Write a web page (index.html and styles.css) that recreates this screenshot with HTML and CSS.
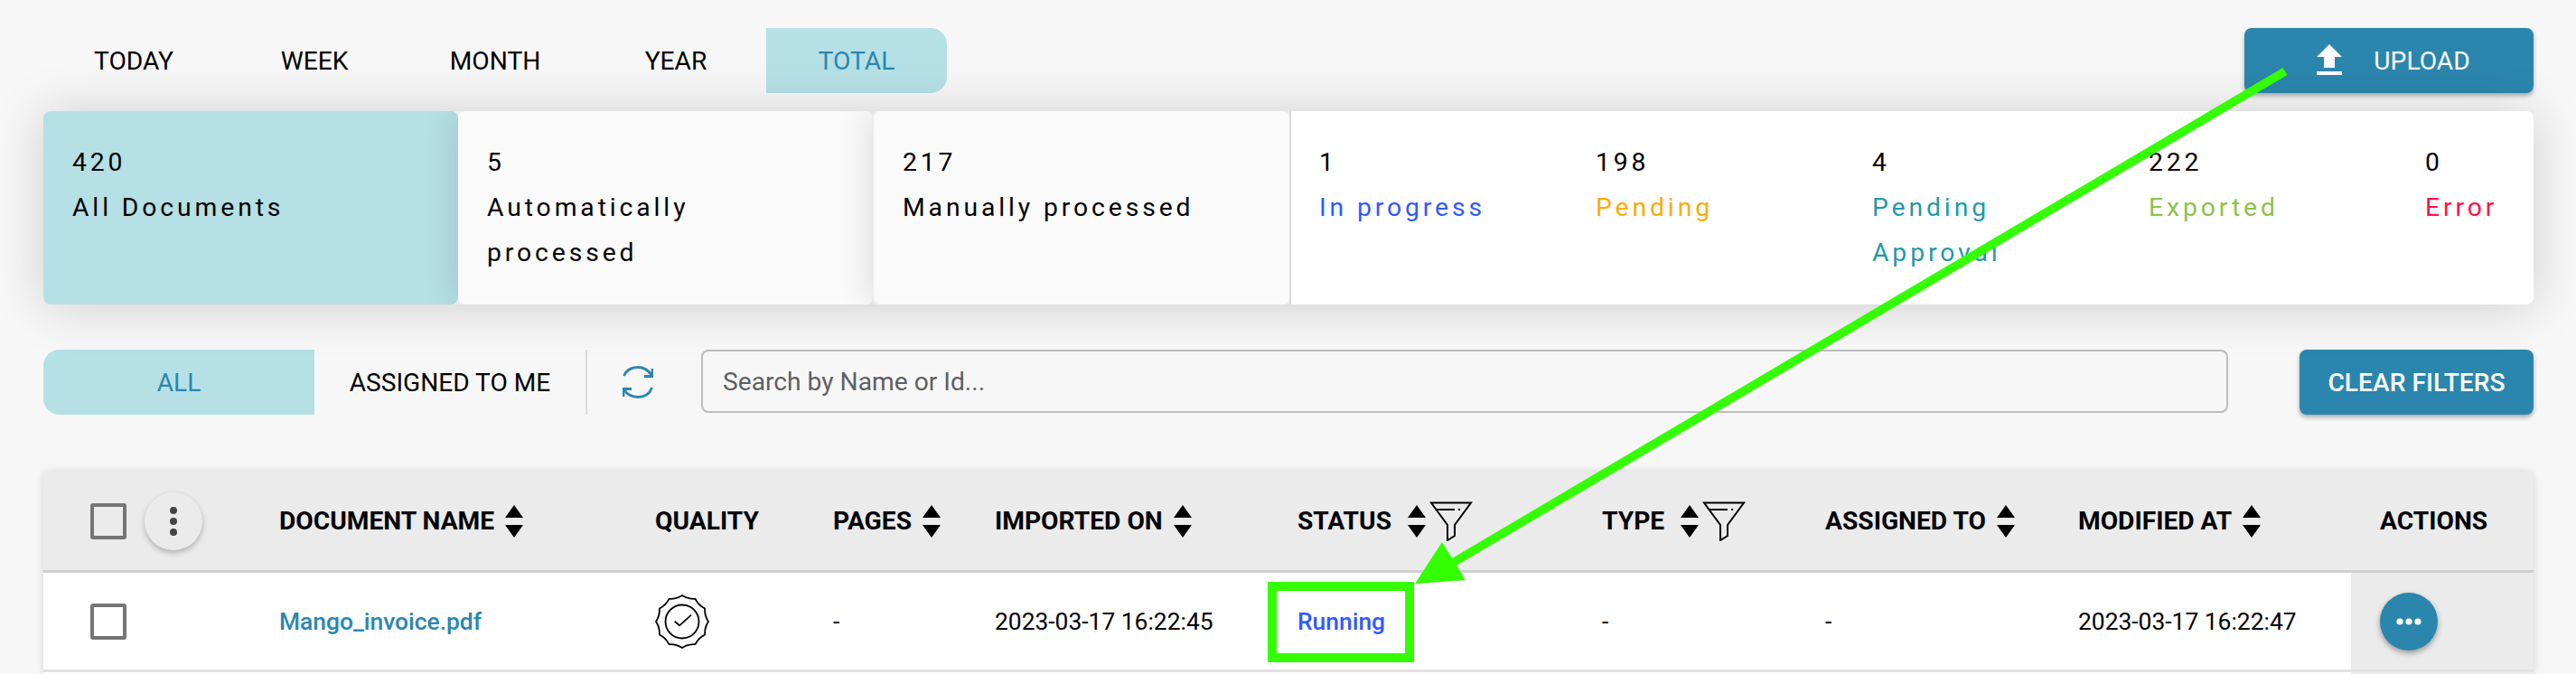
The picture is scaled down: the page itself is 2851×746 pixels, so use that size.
FILE: index.html
```html
<!DOCTYPE html>
<html lang="en">
<head>
  <meta charset="UTF-8" />
  <title>Documents</title>
  <link rel="stylesheet" href="styles.css">
</head>
<body>

  <!-- Period tabs and upload -->
  <div class="top-bar">
    <div class="period-tabs">
      <div class="tab">TODAY</div>
      <div class="tab">WEEK</div>
      <div class="tab">MONTH</div>
      <div class="tab">YEAR</div>
      <div class="tab tab-active">TOTAL</div>
    </div>
    <button class="upload-button">
      <svg class="upload-icon" viewBox="0 0 24 24"><path d="M9 16h6v-6h4l-7-7-7 7h4zm-4 2h14v2H5z"/></svg>
      UPLOAD
    </button>
  </div>

  <!-- Counters -->
  <div class="stats">
    <div class="stat-card stat-card-active">
      <div class="stat-num">420</div>
      <div class="stat-label">All Documents</div>
    </div>
    <div class="stat-card">
      <div class="stat-num">5</div>
      <div class="stat-label">Automatically processed</div>
    </div>
    <div class="stat-card">
      <div class="stat-num">217</div>
      <div class="stat-label">Manually processed</div>
    </div>
    <div class="stat-status">
      <div class="status-col">
        <div class="stat-num">1</div>
        <div class="stat-label c-progress">In progress</div>
      </div>
      <div class="status-col">
        <div class="stat-num">198</div>
        <div class="stat-label c-pending">Pending</div>
      </div>
      <div class="status-col">
        <div class="stat-num">4</div>
        <div class="stat-label c-approval">Pending Approval</div>
      </div>
      <div class="status-col">
        <div class="stat-num">222</div>
        <div class="stat-label c-exported">Exported</div>
      </div>
      <div class="status-col status-col-last">
        <div class="stat-num">0</div>
        <div class="stat-label c-error">Error</div>
      </div>
    </div>
  </div>

  <!-- Filters -->
  <div class="filter-bar">
    <div class="assign-tab assign-tab-active">ALL</div>
    <div class="assign-tab">ASSIGNED TO ME</div>
    <div class="refresh-cell">
      <svg class="refresh-icon" viewBox="0 0 34 36">
        <path d="M1.5 11C4 5 10 1.5 17 1.5C23 1.5 28 4 32 10M33 3V11.5H24"/>
        <path d="M32.5 24C30 31 24 34.5 17 34.5C10 34.5 5 31.5 1.5 26M1 34V25.5H10"/>
      </svg>
    </div>
    <input class="search" type="text" placeholder="Search by Name or Id...">
    <button class="clear-button">CLEAR FILTERS</button>
  </div>

  <!-- Documents table -->
  <div class="doc-table">
    <div class="doc-row doc-head">
      <div class="cell cell-check">
        <span class="checkbox"></span>
        <span class="round-button">
          <svg class="kebab" viewBox="0 0 10 34"><circle cx="5" cy="5" r="4"/><circle cx="5" cy="17" r="4"/><circle cx="5" cy="29" r="4"/></svg>
        </span>
      </div>
      <div class="cell">DOCUMENT NAME <svg class="sort"><use href="#sort-icon"/></svg></div>
      <div class="cell">QUALITY</div>
      <div class="cell">PAGES <svg class="sort"><use href="#sort-icon"/></svg></div>
      <div class="cell">IMPORTED ON <svg class="sort"><use href="#sort-icon"/></svg></div>
      <div class="cell">STATUS <svg class="sort sort-wide"><use href="#sort-icon"/></svg><svg class="funnel"><use href="#funnel-icon"/></svg></div>
      <div class="cell">TYPE <svg class="sort sort-wide"><use href="#sort-icon"/></svg><svg class="funnel"><use href="#funnel-icon"/></svg></div>
      <div class="cell">ASSIGNED TO <svg class="sort"><use href="#sort-icon"/></svg></div>
      <div class="cell">MODIFIED AT <svg class="sort"><use href="#sort-icon"/></svg></div>
      <div class="cell cell-actions">ACTIONS</div>
    </div>
    <div class="doc-row doc-body">
      <div class="cell cell-check"><span class="checkbox"></span></div>
      <div class="cell doc-link">Mango_invoice.pdf</div>
      <div class="cell">
        <svg class="badge" viewBox="0 0 60 60">
          <path d="M30 1Q36.6 5.37 44.5 4.89Q48.03 11.97 55.11 15.5Q54.63 23.4 59 30Q54.63 36.6 55.11 44.5Q48.03 48.03 44.5 55.11Q36.6 54.63 30 59Q23.4 54.63 15.5 55.11Q11.97 48.03 4.89 44.5Q5.37 36.6 1 30Q5.37 23.4 4.89 15.5Q11.97 11.97 15.5 4.89Q23.4 5.37 30 1Z"/>
          <circle cx="30" cy="30" r="18.5"/>
          <path d="M21.7 29.7L27 34.3L40 22.7"/>
        </svg>
      </div>
      <div class="cell">-</div>
      <div class="cell">2023-03-17 16:22:45</div>
      <div class="cell c-running">Running</div>
      <div class="cell">-</div>
      <div class="cell">-</div>
      <div class="cell">2023-03-17 16:22:47</div>
      <div class="cell cell-actions">
        <span class="action-button">
          <svg class="dots" viewBox="0 0 28 8"><circle cx="4" cy="4" r="3.6"/><circle cx="14" cy="4" r="3.6"/><circle cx="24" cy="4" r="3.6"/></svg>
        </span>
      </div>
    </div>
    <div class="doc-row doc-tail"><div class="cell cell-actions"></div></div>
  </div>

  <!-- Shared icons -->
  <svg class="icon-defs">
    <symbol id="sort-icon" viewBox="0 0 20 36">
      <path d="M10 0L20 14H0ZM0 22H20L10 36Z"/>
    </symbol>
    <symbol id="funnel-icon" viewBox="0 0 48 44">
      <path class="funnel-line" d="M2 1.5H46L28 26V38L20 43V26ZM8 9H28M32 9H34"/>
    </symbol>
  </svg>

  <!-- Screenshot annotation -->
  <svg class="annotation" viewBox="0 0 2851 746">
    <rect class="note-box" x="1408" y="649" width="152" height="79"/>
    <line class="note-line" x1="2529" y1="79" x2="1606" y2="624"/>
    <polygon class="note-head" points="1566,646 1596,600 1622,642"/>
  </svg>

</body>
</html>
```

FILE: styles.css
```css
html {
  height: 746px;
  overflow: hidden;
}
body {
  font-family: Roboto, sans-serif;
  margin: 0;
  padding: 31px 47px 0 48px;
  background-color: #f7f7f7;
  color: #000;
  position: relative;
  height: 715px;
  overflow: hidden;
}
button {
  font-family: inherit;
  border: none;
  cursor: pointer;
}
/* Top bar */
.top-bar {
  display: flex;
  justify-content: space-between;
  height: 72px;
}
.period-tabs {
  display: flex;
}
.tab {
  width: 200px;
  display: flex;
  align-items: center;
  justify-content: center;
  font-size: 28.2px;
}
.tab-active {
  background-color: #b5e0e5;
  color: #2b86ad;
  border-radius: 0 18px 18px 0;
}
.upload-button {
  width: 320px;
  background-color: #2b86ad;
  color: #fff;
  font-size: 28.2px;
  border-radius: 8px;
  display: flex;
  align-items: center;
  justify-content: center;
  gap: 25px;
  padding: 0;
  box-shadow: 0 3px 5px rgba(0, 0, 0, 0.3);
}
.upload-icon {
  width: 48px;
  height: 48px;
  fill: #fff;
}
/* Counters */
.stats {
  display: flex;
  position: relative;
  margin-top: 20px;
  height: 214px;
  border-radius: 8px;
  box-shadow: 0 2px 56px rgba(0, 0, 0, 0.17);
}
.stat-card {
  flex: none;
  width: 460px;
  padding: 32px;
  box-sizing: border-box;
  background-color: #fafafa;
  border-radius: 8px;
  box-shadow: 0 0 40px rgba(0, 0, 0, 0.15);
  clip-path: inset(0 0 0 -50px); /* shadow only falls on the card to the left */
  position: relative;
}
.stat-card-active {
  width: 459px;
  background-color: #b5e0e5;
  box-shadow: none;
}
.stat-status {
  flex: 1;
  min-width: 0;
  display: flex;
  position: relative;
  background-color: #fff;
  border-left: 2px solid #dcdcdc;
  border-radius: 0 8px 8px 0;
  padding: 32px 0 0 31px;
}
.status-col {
  flex: none;
  width: 306px;
  padding-right: 60px;
  box-sizing: border-box;
}
.status-col-last {
  width: 120px;
  padding-right: 0;
}
.stat-num, .stat-label {
  font-size: 28.3px;
  line-height: 50px;
  letter-spacing: 3.9px;
}
.c-progress { color: #3059ff; }
.c-pending { color: #ffab00; }
.c-approval { color: #1f9aa8; }
.c-exported { color: #8bc34a; }
.c-error { color: #ff1148; }
/* Filters */
.filter-bar {
  display: flex;
  align-items: flex-start;
  margin-top: 50px;
  height: 72px;
}
.assign-tab {
  width: 300px;
  height: 72px;
  display: flex;
  align-items: center;
  justify-content: center;
  font-size: 28.1px;
}
.assign-tab-active {
  background-color: #b5e0e5;
  color: #2b86ad;
  border-radius: 18px 0 0 18px;
}
.refresh-cell {
  flex: none;
  width: 128px;
  height: 72px;
  border-left: 2px solid #dcdcdc;
  box-sizing: border-box;
  display: flex;
  align-items: center;
  padding-left: 39px;
}
.refresh-icon {
  width: 34px;
  height: 36px;
  fill: none;
  stroke: #2b86ad;
  stroke-width: 2.8;
}
.search {
  flex: none;
  width: 1690px;
  height: 70px;
  box-sizing: border-box;
  padding: 0 22px;
  border: 2.5px solid #bdbdbd;
  border-radius: 8px;
  background: transparent;
  font-family: Roboto, sans-serif;
  font-size: 28.2px;
  outline: none;
}
.search::placeholder {
  color: #5f5f5f;
  opacity: 1;
}
.clear-button {
  flex: none;
  width: 259px;
  height: 72px;
  margin-left: 79px;
  background-color: #2b86ad;
  color: #fff;
  font-size: 28.2px;
  font-weight: 500;
  border-radius: 8px;
  box-shadow: 0 3px 5px rgba(0, 0, 0, 0.3);
}
/* Documents table */
.doc-table {
  margin-top: 63px;
  border-radius: 8px 8px 0 0;
  box-shadow: 0 0 10px rgba(0, 0, 0, 0.15);
  font-size: 26.4px;
}
.doc-row {
  display: grid;
  grid-template-columns: 261px 416px 197px 179px 335px 337px 247px 280px 302px 202px;
  align-items: stretch;
}
.doc-head {
  height: 109px;
  background-color: #ebebeb;
  border-bottom: 3px solid #cfcfcf;
  border-radius: 8px 8px 0 0;
  font-size: 28.2px;
  font-weight: 700;
}
.doc-body {
  height: 107px;
  background-color: #fff;
  border-bottom: 3px solid #e2e2e2;
}
.doc-tail {
  height: 2px;
  background-color: #fff;
}
.cell {
  display: flex;
  align-items: center;
  white-space: nowrap;
}
.cell-check {
  padding-left: 52px;
  gap: 20px;
}
.cell-actions {
  grid-column: 10;
  background-color: #ebebeb;
  padding-left: 32px;
}
.checkbox {
  width: 40px;
  height: 40px;
  box-sizing: border-box;
  border: 4px solid #757575;
  border-radius: 3px;
}
.round-button {
  width: 64px;
  height: 64px;
  border-radius: 50%;
  background-color: #ebebeb;
  box-shadow: 0 3px 6px rgba(0, 0, 0, 0.25);
  display: flex;
  align-items: center;
  justify-content: center;
}
.kebab {
  width: 10px;
  height: 34px;
  fill: #444;
}
.sort {
  width: 20px;
  height: 36px;
  margin-left: 12px;
  fill: #000;
}
.sort-wide {
  margin-left: 18px;
}
.funnel {
  width: 48px;
  height: 44px;
  margin-left: 4px;
}
.funnel-line {
  fill: none;
  stroke: #000;
  stroke-width: 2;
}
.icon-defs {
  display: none;
}
.doc-link {
  color: #2b86ad;
  font-weight: 500;
}
.c-running {
  color: #3059ff;
  font-weight: 500;
}
.badge {
  width: 60px;
  height: 60px;
  fill: none;
  stroke: #000;
  stroke-width: 1.8;
}
.action-button {
  width: 64px;
  height: 64px;
  border-radius: 50%;
  background-color: #2b86ad;
  box-shadow: 0 3px 6px rgba(0, 0, 0, 0.35);
  display: flex;
  align-items: center;
  justify-content: center;
}
.dots {
  width: 28px;
  height: 8px;
  fill: #fff;
}
/* Annotation over the screenshot */
.annotation {
  position: absolute;
  left: 0;
  top: 0;
  width: 2851px;
  height: 746px;
  pointer-events: none;
}
.note-box {
  fill: none;
  stroke: #33ff00;
  stroke-width: 10;
}
.note-line {
  stroke: #33ff00;
  stroke-width: 9.5;
}
.note-head {
  fill: #33ff00;
}
```
